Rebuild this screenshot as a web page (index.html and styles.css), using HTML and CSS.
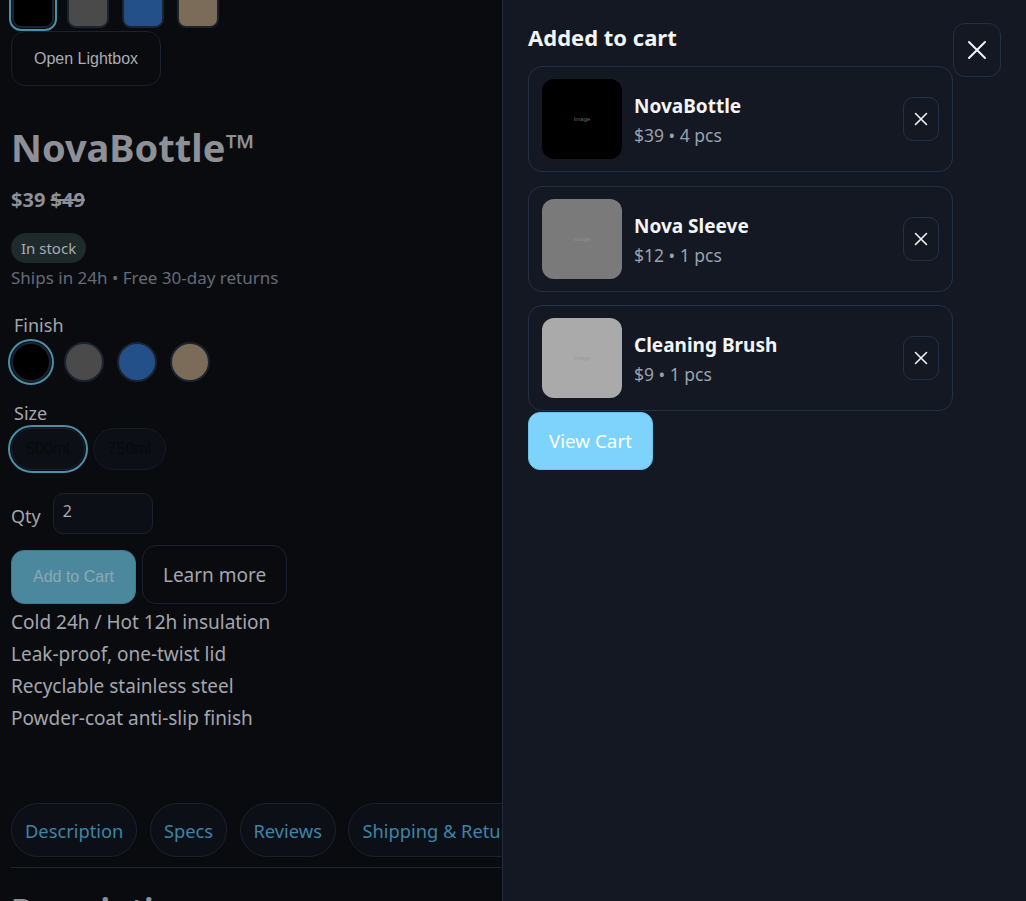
FILE: index.html
```html
<!DOCTYPE html>
<html lang="en">
<head>
<meta charset="utf-8">
<title>NovaBottle</title>
<link rel="stylesheet" href="styles.css">
</head>
<body>
<main class="product">
  <div class="thumbs">
    <button class="thumb thumb-black selected"></button>
    <button class="thumb thumb-gray"></button>
    <button class="thumb thumb-blue"></button>
    <button class="thumb thumb-sand"></button>
  </div>
  <button class="lightbox-btn">Open Lightbox</button>
  <h1 class="title">NovaBottle™</h1>
  <div class="price"><span>$39</span> <s>$49</s></div>
  <span class="badge">In stock</span>
  <p class="ships">Ships in 24h • Free 30-day returns</p>
  <div class="label label-finish">Finish</div>
  <div class="swatches">
    <button class="swatch sw-black selected"></button>
    <button class="swatch sw-gray"></button>
    <button class="swatch sw-blue"></button>
    <button class="swatch sw-sand"></button>
  </div>
  <div class="label label-size">Size</div>
  <div class="sizes">
    <button class="size selected">500ml</button>
    <button class="size">750ml</button>
  </div>
  <div class="qty-row">
    <label class="qty-label">Qty</label>
    <input class="qty-input" type="text" value="2">
  </div>
  <div class="actions">
    <button class="add-btn">Add to Cart</button>
    <button class="learn-btn">Learn more</button>
  </div>
  <ul class="features">
    <li>Cold 24h / Hot 12h insulation</li>
    <li>Leak-proof, one-twist lid</li>
    <li>Recyclable stainless steel</li>
    <li>Powder-coat anti-slip finish</li>
  </ul>
  <nav class="tabs">
    <button class="tab">Description</button>
    <button class="tab">Specs</button>
    <button class="tab">Reviews</button>
    <button class="tab">Shipping &amp; Returns</button>
  </nav>
  <h2 class="section-title">Description</h2>
</main>

<aside class="drawer">
  <h2 class="drawer-title">Added to cart</h2>
  <button class="close-btn" aria-label="Close">
    <svg width="20" height="20" viewBox="0 0 20 20"><path d="M2 2L18 18M18 2L2 18" stroke="#f3f4f6" stroke-width="2" stroke-linecap="round"/></svg>
  </button>
  <div class="items">
    <div class="item">
      <div class="img img-black"><span>Image</span></div>
      <div class="info">
        <div class="name">NovaBottle</div>
        <div class="meta">$39 • 4 pcs</div>
      </div>
      <button class="remove-btn" aria-label="Remove">
        <svg width="14" height="14" viewBox="0 0 14 14"><path d="M1.5 1.5L12.5 12.5M12.5 1.5L1.5 12.5" stroke="#f3f4f6" stroke-width="1.6" stroke-linecap="round"/></svg>
      </button>
    </div>
    <div class="item">
      <div class="img img-gray"><span>Image</span></div>
      <div class="info">
        <div class="name">Nova Sleeve</div>
        <div class="meta">$12 • 1 pcs</div>
      </div>
      <button class="remove-btn" aria-label="Remove">
        <svg width="14" height="14" viewBox="0 0 14 14"><path d="M1.5 1.5L12.5 12.5M12.5 1.5L1.5 12.5" stroke="#f3f4f6" stroke-width="1.6" stroke-linecap="round"/></svg>
      </button>
    </div>
    <div class="item">
      <div class="img img-light"><span>Image</span></div>
      <div class="info">
        <div class="name">Cleaning Brush</div>
        <div class="meta">$9 • 1 pcs</div>
      </div>
      <button class="remove-btn" aria-label="Remove">
        <svg width="14" height="14" viewBox="0 0 14 14"><path d="M1.5 1.5L12.5 12.5M12.5 1.5L1.5 12.5" stroke="#f3f4f6" stroke-width="1.6" stroke-linecap="round"/></svg>
      </button>
    </div>
  </div>
  <button class="view-cart">View Cart</button>
</aside>
</body>
</html>
```

FILE: styles.css
```css
* { box-sizing: border-box; }
html, body { margin: 0; height: 100%; overflow: hidden; }
body {
  background: #0a0b0f;
  font-family: "Noto Sans", "Open Sans", sans-serif;
  color: #a3a6ad;
}
button { cursor: pointer; }

.product {
  padding: 0 11px;
  display: flex;
  flex-direction: column;
  align-items: flex-start;
}

.thumbs {
  display: flex;
  gap: 13px;
  margin-top: -14px;
  padding-left: 1px;
}
.thumb {
  width: 42px; height: 42px;
  border-radius: 9px;
  border: 2px solid #1c2230;
  padding: 0;
}
.thumb.selected { outline: 2px solid #4b8fa8; outline-offset: 1px; }
.thumb-black { background: #000; }
.thumb-gray { background: #4a4a4a; }
.thumb-blue { background: #24508a; }
.thumb-sand { background: #7a6c59; }

.lightbox-btn {
  margin-top: 3px;
  height: 55px;
  padding: 0 22px;
  border-radius: 14px;
  border: 1px solid #1b2130;
  background: #0a0b0f;
  color: #a9adb6;
  font-family: "Liberation Sans", Arial, sans-serif;
  font-size: 16px;
}

.title {
  margin: 37px 0 0;
  font-size: 38px;
  line-height: 48px;
  font-weight: 700;
  color: #8e9097;
}
.price {
  margin-top: 16px;
  font-size: 20px;
  line-height: 26px;
  font-weight: 700;
  color: #8e9097;
}
.badge {
  margin-top: 20px;
  height: 30px;
  line-height: 30px;
  padding: 0 10px;
  border-radius: 15px;
  background: #1f2a2a;
  color: #a7adb0;
  font-size: 15px;
}
.ships {
  margin: 2px 0 0;
  font-size: 17px;
  line-height: 26px;
  color: #656b78;
}
.label {
  font-size: 18px;
  line-height: 24px;
  color: #a3a6ad;
  padding-left: 3px;
}
.label-finish { margin-top: 22px; }
.swatches {
  display: flex;
  gap: 13px;
  margin-top: 5px;
  padding-left: 0;
}
.swatch {
  width: 40px; height: 40px;
  border-radius: 50%;
  border: 2px solid #1c2230;
  padding: 0;
}
.swatch.selected { outline: 2px solid #4b8fa8; outline-offset: 1px; }
.sw-black { background: #000; }
.sw-gray { background: #4a4a4a; }
.sw-blue { background: #24508a; }
.sw-sand { background: #7a6c59; }

.label-size { margin-top: 19px; }
.sizes {
  display: flex;
  gap: 8px;
  margin-top: 3px;
  align-items: center;
}
.size {
  height: 42px;
  padding: 0 14px;
  border-radius: 21px;
  border: 1px solid #161b26;
  background: #0c0f16;
  color: #0a0a0a;
  font-family: "Liberation Sans", Arial, sans-serif;
  font-size: 16px;
}
.size.selected { outline: 2px solid #4b8fa8; outline-offset: 1px; border-color: #1c2230; }

.qty-row {
  display: flex;
  align-items: center;
  gap: 12px;
  margin-top: 23px;
}
.qty-label { font-size: 18px; color: #a3a6ad; padding-top: 4px; }
.qty-input {
  width: 100px; height: 41px;
  border-radius: 10px;
  border: 1px solid #1b2130;
  background: #0c0f16;
  color: #a9adb6;
  font-family: "Noto Sans", sans-serif;
  font-size: 16px;
  padding: 0 9px 6px;
}
.actions {
  display: flex;
  gap: 6px;
  align-items: flex-end;
  margin-top: 11px;
}
.add-btn {
  height: 54px;
  padding: 0 21px;
  border-radius: 13px;
  border: 1px solid #3e7a90;
  background: #4b889d;
  color: #8ea8b2;
  font-family: "Liberation Sans", Arial, sans-serif;
  font-size: 16px;
}
.learn-btn {
  height: 59px;
  padding: 0 20px;
  border-radius: 14px;
  border: 1px solid #1b2130;
  background: #0a0b0f;
  color: #a3a6ad;
  font-family: "Noto Sans", sans-serif;
  font-size: 19px;
}

.features {
  list-style: none;
  margin: 2px 0 0;
  padding: 0;
}
.features li {
  font-size: 19px;
  line-height: 32px;
  color: #a3a6ad;
}

.tabs {
  display: flex;
  gap: 12.5px;
  margin-top: 69px;
  padding-bottom: 10px;
  border-bottom: 1px solid #1b2231;
  width: 700px;
  flex-wrap: nowrap;
}
.tab {
  height: 54px;
  padding: 0 13px;
  border-radius: 27px;
  border: 1px solid #1b2130;
  background: #0c0f16;
  color: #3e84a8;
  font-family: "Noto Sans", sans-serif;
  font-size: 18.3px;
  white-space: nowrap;
  flex-shrink: 0;
}
.section-title {
  margin: 22px 0 0;
  font-size: 32px;
  line-height: 40px;
  color: #8e9097;
}

/* Drawer overlay */
.drawer {
  position: fixed;
  top: 0; right: 0; bottom: 0;
  width: 524px;
  background: #141822;
  border-left: 1px solid #222a3a;
  padding: 22px 73px 0 25px;
  display: flex;
  flex-direction: column;
  align-items: flex-start;
}
.drawer-title {
  margin: 0;
  font-size: 22px;
  line-height: 30px;
  font-weight: 700;
  color: #f3f4f6;
}
.close-btn {
  position: absolute;
  top: 23px; right: 25px;
  width: 48px; height: 54px;
  border-radius: 12px;
  border: 1px solid #243048;
  background: #141822;
  display: flex; align-items: center; justify-content: center;
  padding: 0;
}
.items {
  display: flex;
  flex-direction: column;
  gap: 14px;
  margin-top: 14px;
  align-self: stretch;
}
.item {
  display: flex;
  align-items: center;
  gap: 12px;
  height: 106px;
  padding: 0 13px;
  border-radius: 14px;
  border: 1px solid #243048;
}
.items .item:nth-child(3) { margin-top: -1px; }
.img {
  width: 80px; height: 80px;
  border-radius: 12px;
  flex-shrink: 0;
  display: flex; align-items: center; justify-content: center;
  font-family: "Liberation Sans", Arial, sans-serif;
  font-size: 6px;
}
.img-black { background: #000; color: #6b6b6b; }
.img-gray { background: #7a7a7a; color: #8f8f8f; }
.img-light { background: #aaaaaa; color: #9a9a9a; }
.info { flex: 1; padding-top: 4px; }
.name {
  font-size: 19px;
  line-height: 29px;
  font-weight: 700;
  color: #f3f4f6;
}
.meta {
  font-size: 17.5px;
  line-height: 29px;
  color: #9aa1ad;
}
.remove-btn {
  width: 36px; height: 44px;
  border-radius: 10px;
  border: 1px solid #243048;
  background: #141822;
  display: flex; align-items: center; justify-content: center;
  padding: 0;
}
.view-cart {
  margin-top: 1px;
  height: 58px;
  padding: 0 20px;
  border-radius: 12px;
  border: 1px solid #6cc3ea;
  background: #7dd3fc;
  color: #ffffff;
  font-family: "Noto Sans", sans-serif;
  font-size: 18.8px;
}
```
